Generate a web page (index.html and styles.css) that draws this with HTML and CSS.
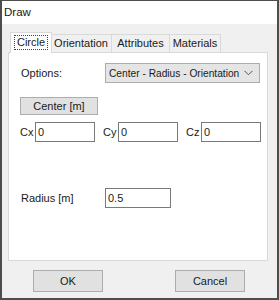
FILE: index.html
```html
<!DOCTYPE html>
<html lang="en">

<head>
    <meta charset="UTF-8">
    <title>Draw</title>
    <link rel="stylesheet" href="styles.css">
</head>

<body>
    <div class="window">
        <div class="titlebar">Draw</div>

        <div class="dialog">
            <div class="tabs">
                <div class="tab active"><span class="focus">Circle</span></div>
                <div class="tab orientation">Orientation</div>
                <div class="tab attributes">Attributes</div>
                <div class="tab materials">Materials</div>
            </div>

            <div class="pane">
                <div class="row options_row">
                    <span class="label wide">Options:</span>
                    <div class="combo">
                        <span class="combo_text">Center - Radius - Orientation</span>
                        <svg class="chevron" width="9" height="6" viewBox="0 0 9 6">
                            <path d="M0.5 0.8 L4.5 4.8 L8.5 0.8" fill="none" stroke="#555" stroke-width="1"/>
                        </svg>
                    </div>
                </div>

                <button class="btn center_btn">Center [m]</button>

                <div class="row coords">
                    <span class="label short">Cx</span>
                    <input class="field coord" type="text" value="0">
                    <span class="label short gap">Cy</span>
                    <input class="field coord" type="text" value="0">
                    <span class="label short gap">Cz</span>
                    <input class="field coord" type="text" value="0">
                </div>

                <div class="row radius_row">
                    <span class="label wide">Radius [m]</span>
                    <input class="field radius" type="text" value="0.5">
                </div>
            </div>

            <div class="footer">
                <button class="btn action">OK</button>
                <button class="btn action">Cancel</button>
            </div>
        </div>
    </div>
</body>

</html>
```

FILE: styles.css
```css
* {
    box-sizing: border-box;
}

body {
    margin: 0;
    font-family: 'Liberation Sans', Arial, sans-serif;
    font-size: 11px;
    color: #1a1a1a;
}

.window {
    width: 279px;
    height: 300px;
    border: 2px solid #4d4d4d;
    border-top-width: 1px;
    background: #f0f0f0;
    display: flex;
    flex-direction: column;
}

.titlebar {
    height: 23px;
    background: #fff;
    padding: 5px 0 0 2px;
    font-size: 11.5px;
}

.dialog {
    flex: 1;
    padding: 8px 8px 0 6px;
}

/* tab strip */
.tabs {
    display: flex;
    align-items: flex-end;
    height: 20px;
    padding-left: 4px;
}

.tab {
    height: 18px;
    border: 1px solid #d9d9d9;
    border-bottom: none;
    margin-left: -1px;
    background: #f0f0f0;
    text-align: center;
    line-height: 16px;
    white-space: nowrap;
}

.tab.active {
    position: relative;
    z-index: 1;
    width: 42px;
    height: 21px;
    margin-left: -2px;
    margin-right: -1px;
    margin-bottom: -1px;
    background: #fff;
    padding-top: 2px;
    line-height: 13px;
}

.focus {
    display: inline-block;
    width: 34px;
    border: 1px dotted #444;
}

.orientation { width: 62px; }
.attributes { width: 59px; }
.materials { width: 52px; }

.pane {
    height: 209px;
    width: 260px;
    background: #fff;
    border: 1px solid #d9d9d9;
    padding: 10px 0 0 11px;
}

.row {
    display: flex;
    align-items: center;
}

.label.wide {
    width: 85px;
    padding-left: 1px;
}

.label.short {
    width: 15px;
}

.label.gap {
    margin-left: 8px;
}

.combo {
    width: 155px;
    height: 20px;
    background: #e5e5e5;
    border: 1px solid #acacac;
    display: flex;
    align-items: center;
    justify-content: space-between;
    padding: 0 6px 0 3px;
    white-space: nowrap;
}

.combo_text {
    font-size: 10.2px;
}

.chevron {
    flex-shrink: 0;
}

.btn {
    font-family: inherit;
    font-size: 11px;
    color: #1a1a1a;
    background: #e1e1e1;
    border: 1px solid #adadad;
    padding: 0;
}

.center_btn {
    display: block;
    width: 78px;
    height: 18px;
    margin: 14px 0 0 0;
}

.coords {
    margin-top: 7px;
}

.field {
    height: 20px;
    border: 1px solid #7a7a7a;
    font-family: inherit;
    font-size: 11px;
    color: #1a1a1a;
    padding: 0 2px;
    outline: none;
    background: #fff;
}

.coord {
    width: 60px;
}

.radius_row {
    margin-top: 46px;
}

.radius {
    width: 66px;
}

.footer {
    display: flex;
    gap: 72px;
    padding: 9px 0 0 25px;
}

.action {
    width: 70px;
    height: 22px;
}
```
